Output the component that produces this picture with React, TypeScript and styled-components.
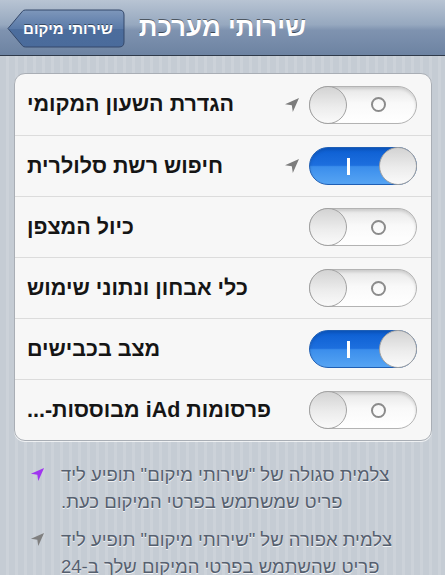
import React from "react";
import styled, { createGlobalStyle } from "styled-components";

const Global = createGlobalStyle`
  html, body { margin: 0; padding: 0; }
  body {
    width: 445px;
    height: 575px;
    overflow: hidden;
    font-family: "Liberation Sans", "DejaVu Sans", Arial, sans-serif;
    background: repeating-linear-gradient(90deg, #c5ccd4 0px, #c5ccd4 6px, #ccd2d9 6px, #ccd2d9 9px);
  }
`;

const Page = styled.div`
  width: 445px;
  min-height: 575px;
`;

const NavBar = styled.header`
  height: 55px;
  border-bottom: 1px solid #2f3a4a;
  background: linear-gradient(#b8c4d3 0%, #96a8bf 45%, #7f93b0 55%, #6d83a2 100%);
  display: grid;
  grid-template-columns: 1fr auto 1fr;
  align-items: center;
`;

const BackButton = styled.div`
  position: relative;
  justify-self: start;
  margin-left: 7px;
  margin-top: 1px;
  width: 118px;
  height: 39px;
  box-sizing: border-box;
  padding: 0 8px 0 12px;
  display: flex;
  align-items: center;
  justify-content: center;
`;

const BackShape = styled.svg`
  position: absolute;
  inset: 0;
`;

const BackLabel = styled.span`
  position: relative;
  color: #fff;
  font-size: 15px;
  font-weight: bold;
  text-shadow: 0 -1px 0 rgba(0, 0, 0, 0.45);
`;

const Title = styled.h1`
  margin: 0;
  color: #fff;
  font-size: 26px;
  font-weight: bold;
  text-shadow: 0 -1px 0 rgba(0, 0, 0, 0.5);
`;

const Content = styled.main`
  padding: 17px 13px 0 14px;
`;

const Group = styled.div`
  border: 1px solid #a9aeb5;
  border-radius: 11px;
  background: #f7f7f7;
  overflow: hidden;
  box-shadow: 0 1px 0 rgba(255, 255, 255, 0.7);
`;

const Row = styled.div<{ $first?: boolean }>`
  height: 61px;
  box-sizing: border-box;
  border-top: ${(p) => (p.$first ? "none" : "1px solid #dcdcdc")};
  display: flex;
  align-items: center;
  padding: 0 14px 0 12px;
`;

const Label = styled.span`
  flex: 1;
  min-width: 0;
  text-align: left;
  font-size: 21.5px;
  font-weight: bold;
  color: #151515;
  white-space: nowrap;
  overflow: hidden;
`;

const LocIcon = styled.svg`
  width: 16px;
  height: 16px;
  margin-right: 9px;
  flex: none;
`;

const Switch = styled.div<{ $on: boolean }>`
  width: 108px;
  height: 38px;
  flex: none;
  box-sizing: border-box;
  border-radius: 19px;
  border: 1px solid ${(p) => (p.$on ? "#1f5fb5" : "#b3b3b3")};
  background: ${(p) =>
    p.$on
      ? "linear-gradient(#0c5ed2 0%, #1d6fde 48%, #3b8eec 52%, #56a4f3 100%)"
      : "linear-gradient(#e6e6e6 0%, #f9f9f9 45%, #ffffff 100%)"};
  box-shadow: inset 0 2px 3px rgba(0, 0, 0, 0.12);
  display: flex;
  align-items: center;
`;

const Knob = styled.div`
  width: 38px;
  height: 38px;
  margin: -1px;
  box-sizing: border-box;
  border-radius: 50%;
  border: 1px solid #a2a2a2;
  background: linear-gradient(#d3d3d3 0%, #ececec 55%, #fafafa 100%);
  flex: none;
`;

const Mark = styled.div<{ $on: boolean }>`
  flex: 1;
  display: flex;
  align-items: center;
  justify-content: center;
  padding: ${(p) => (p.$on ? "0 0 0 6px" : "0 6px 0 0")};
`;

const Ring = styled.div`
  width: 15px;
  height: 15px;
  box-sizing: border-box;
  border-radius: 50%;
  border: 2px solid #8b8b8b;
`;

const Bar = styled.div`
  width: 3px;
  height: 17px;
  background: #fff;
`;

const Notes = styled.div`
  padding: 20px 33px 0 30px;
  display: flex;
  flex-direction: column;
  gap: 11px;
`;

const Note = styled.div`
  display: flex;
  align-items: flex-start;
  gap: 16px;
`;

const NoteIcon = styled.svg`
  width: 15px;
  height: 15px;
  margin-top: 6px;
  flex: none;
`;

const NoteText = styled.p`
  margin: 0;
  flex: 1;
  text-align: left;
  font-size: 18.5px;
  line-height: 27px;
  color: #56606f;
  text-shadow: 0 1px 0 rgba(255, 255, 255, 0.8);
`;

const ArrowPath = "M15 1 L1 7.2 L7.8 8.2 L8.8 15 Z";

const Arrow: React.FC<{ color: string; note?: boolean }> = ({ color, note }) => {
  const Comp = note ? NoteIcon : LocIcon;
  return (
    <Comp viewBox="0 0 16 16">
      <path d={ArrowPath} fill={color} />
    </Comp>
  );
};

const Toggle: React.FC<{ on: boolean }> = ({ on }) => (
  <Switch $on={on}>
    {on ? (
      <>
        <Mark $on>
          <Bar />
        </Mark>
        <Knob />
      </>
    ) : (
      <>
        <Knob />
        <Mark $on={false}>
          <Ring />
        </Mark>
      </>
    )}
  </Switch>
);

const rows = [
  { label: "הגדרת השעון המקומי", on: false, loc: true },
  { label: "חיפוש רשת סלולרית", on: true, loc: true },
  { label: "כיול המצפן", on: false, loc: false },
  { label: "כלי אבחון ונתוני שימוש", on: false, loc: false },
  { label: "מצב בכבישים", on: true, loc: false },
  { label: "פרסומות iAd מבוססות-...", on: false, loc: false },
];

export default function App() {
  return (
    <Page>
      <Global />
      <NavBar>
        <BackButton>
          <BackShape width="118" height="39" viewBox="0 0 118 39">
            <defs>
              <linearGradient id="bk" x1="0" y1="0" x2="0" y2="1">
                <stop offset="0" stopColor="#7e97bb" />
                <stop offset="0.5" stopColor="#5a7aa8" />
                <stop offset="0.52" stopColor="#4c6d9d" />
                <stop offset="1" stopColor="#4a6b9b" />
              </linearGradient>
            </defs>
            <path
              d="M1 19.5 L15.5 2.2 Q16.5 1 18.5 1 L112 1 Q117 1 117 6 L117 33 Q117 38 112 38 L18.5 38 Q16.5 38 15.5 36.8 Z"
              fill="url(#bk)"
              stroke="#34486a"
              strokeWidth="1"
            />
          </BackShape>
          <BackLabel dir="rtl">שירותי מיקום</BackLabel>
        </BackButton>
        <Title dir="rtl">שירותי מערכת</Title>
        <div />
      </NavBar>
      <Content>
        <Group>
          {rows.map((r, i) => (
            <Row key={i} $first={i === 0}>
              <Label>
                <span dir="rtl">{r.label}</span>
              </Label>
              {r.loc && <Arrow color="#7c7c7c" />}
              <Toggle on={r.on} />
            </Row>
          ))}
        </Group>
      </Content>
      <Notes>
        <Note>
          <Arrow color="#a034f0" note />
          <NoteText dir="rtl">
            צלמית סגולה של "שירותי מיקום" תופיע ליד
            <br />
            פריט שמשתמש בפרטי המיקום כעת.
          </NoteText>
        </Note>
        <Note>
          <Arrow color="#7f7f7f" note />
          <NoteText dir="rtl">
            צלמית אפורה של "שירותי מיקום" תופיע ליד
            <br />
            פריט שהשתמש בפרטי המיקום שלך ב-24
          </NoteText>
        </Note>
      </Notes>
    </Page>
  );
}
